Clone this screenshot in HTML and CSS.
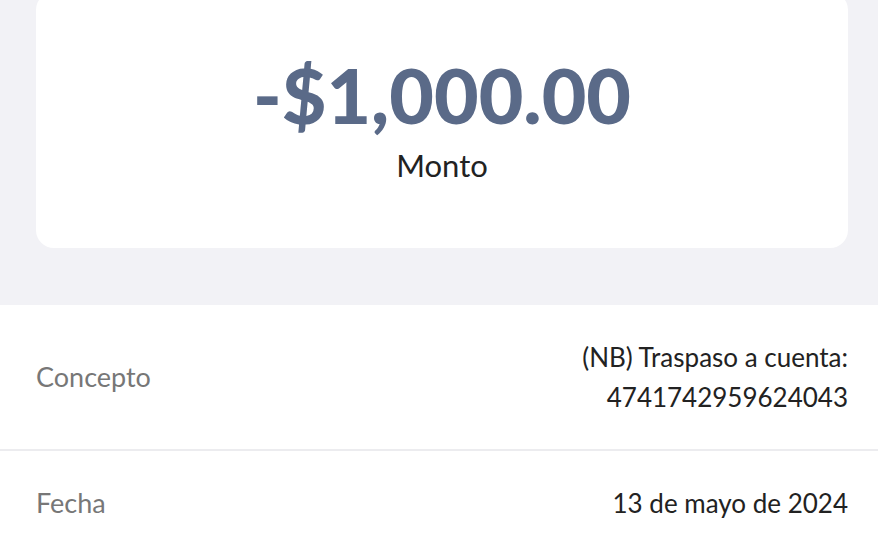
FILE: index.html
```html
<!DOCTYPE html>
<html lang="es">
<head>
  <meta charset="UTF-8">
  <meta name="viewport" content="width=device-width, initial-scale=1.0">
  <title>Detalle de movimiento</title>
  <link rel="stylesheet" href="styles.css">
</head>
<body>

  <!-- Amount header -->
  <div class="summary">
    <div class="amount-card">
      <div class="amount">-$1,000.00</div>
      <div class="amount-label">Monto</div>
    </div>
  </div>

  <!-- Details -->
  <div class="details">
    <div class="detail-row">
      <div class="detail-label">Concepto</div>
      <div class="detail-value">(NB) Traspaso a cuenta:<br>4741742959624043</div>
    </div>
    <div class="detail-row">
      <div class="detail-label">Fecha</div>
      <div class="detail-value">13 de mayo de 2024</div>
    </div>
  </div>

</body>
</html>
```

FILE: styles.css
```css
body {
  margin: 0;
  padding: 0;
  overflow: hidden;
  font-family: Lato, "Open Sans", sans-serif;
  background: #ffffff;
  color: #222222;
}

/* Amount header */
.summary {
  display: flow-root;
  background: #f2f2f6;
  height: 305px;
  padding: 0 30px 0 36px;
  box-sizing: border-box;
}

.amount-card {
  margin-top: -8px;
  height: 256px;
  background: #ffffff;
  border-radius: 18px;
  display: flex;
  flex-direction: column;
  align-items: center;
  justify-content: center;
  padding-bottom: 2px;
  box-sizing: border-box;
}

.amount {
  font-size: 77px;
  font-weight: 900;
  color: #5a6a88;
  line-height: 84px;
  margin-top: -2px;
}

.amount-label {
  font-size: 31px;
  line-height: 38px;
  margin-top: 10px;
  color: #222222;
}

/* Details */
.detail-row {
  display: flex;
  justify-content: space-between;
  align-items: center;
  padding: 32px 30px 32px 36px;
  font-size: 27px;
  line-height: 40px;
}

.detail-row + .detail-row {
  border-top: 2px solid #ececef;
}

.detail-label {
  color: #777777;
}

.detail-value {
  font-size: 26px;
  text-align: right;
  color: #222222;
}
```
